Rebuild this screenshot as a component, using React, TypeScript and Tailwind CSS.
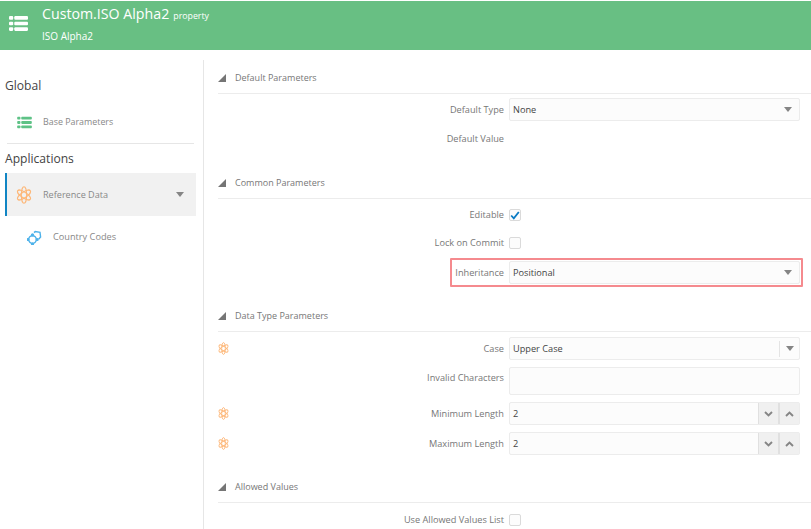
import React from "react";

const font = { fontFamily: '"Open Sans", "Noto Sans", sans-serif' };

function Atom({ w, h, sw = 1.3 }: { w: number; h: number; sw?: number }) {
  return (
    <svg width={w} height={h} viewBox="0 0 20 20" preserveAspectRatio="none" fill="none" stroke="#fdb778" strokeWidth={sw} className="shrink-0">
      <ellipse cx="10" cy="10" rx="3.3" ry="9.2" />
      <ellipse cx="10" cy="10" rx="3.3" ry="9.2" transform="rotate(60 10 10)" />
      <ellipse cx="10" cy="10" rx="3.3" ry="9.2" transform="rotate(120 10 10)" />
    </svg>
  );
}

function ListIcon({ color, w, h }: { color: string; w: number; h: number }) {
  return (
    <svg width={w} height={h} viewBox="0 0 18 16" fill={color} className="shrink-0">
      <rect x="0" y="1" width="4" height="3.4" rx="1" />
      <rect x="5" y="1" width="13" height="3.4" rx="1" />
      <rect x="0" y="6.3" width="4" height="3.4" rx="1" />
      <rect x="5" y="6.3" width="13" height="3.4" rx="1" />
      <rect x="0" y="11.6" width="4" height="3.4" rx="1" />
      <rect x="5" y="11.6" width="13" height="3.4" rx="1" />
    </svg>
  );
}

function Caret() {
  return (
    <svg width="8" height="5" viewBox="0 0 8 5" fill="#858585" className="shrink-0">
      <path d="M0 0h8L4 5z" />
    </svg>
  );
}

function Chev({ up }: { up?: boolean }) {
  return (
    <svg width="9" height="6" viewBox="0 0 9 6" fill="none" stroke="#858585" strokeWidth="1.9">
      <path d={up ? "M1 5l3.5-3.5L8 5" : "M1 1l3.5 3.5L8 1"} />
    </svg>
  );
}

function SectionHeader({ title, className }: { title: string; className: string }) {
  return (
    <div className={`flex items-center gap-[8px] h-[30px] pt-[3px] border-b border-[#ececec] box-content text-[9px] text-[#777] ${className}`}>
      <svg width="8" height="8" viewBox="0 0 8 8" fill="#757575" className="shrink-0">
        <path d="M8 0v8H0z" />
      </svg>
      <span className="ml-[1px]">{title}</span>
    </div>
  );
}

function Row({ label, atom, className, labelClass = "", children }: { label: string; atom?: boolean; className: string; labelClass?: string; children?: React.ReactNode }) {
  return (
    <div className={`flex items-center pr-[11px] ${className}`}>
      <div className="w-[10px] shrink-0 flex">{atom && <Atom w={11} h={13} sw={1.5} />}</div>
      <div className={`flex-1 text-right text-[9.2px] text-[#777] pr-[5px] ${labelClass}`}>{label}</div>
      <div className="w-[291px] shrink-0 flex items-center">{children}</div>
    </div>
  );
}

function Select({ value, split }: { value: string; split?: boolean }) {
  return (
    <div className="w-full h-[23px] flex items-center bg-[#fcfcfc] border border-[#ececec] rounded-[2px] pl-[3px] text-[9.2px] text-[#444]">
      <span className="flex-1">{value}</span>
      {split && <span className="h-[16px] w-px bg-[#e4e4e4]" />}
      <span className={`flex justify-center ${split ? "w-[19px]" : "w-[22px]"}`}>
        <Caret />
      </span>
    </div>
  );
}

function Spinner({ value }: { value: string }) {
  return (
    <div className="w-full h-[23px] flex items-center bg-[#fcfcfc] border border-[#ececec] rounded-[2px] pl-[3px] text-[9.2px] text-[#444]">
      <span className="flex-1">{value}</span>
      <span className="h-full w-[20px] flex items-center justify-center bg-[#f0f0f0] border-l border-[#e0e0e0]">
        <Chev />
      </span>
      <span className="h-full w-[21px] flex items-center justify-center bg-[#f0f0f0] border-l-2 border-[#e0e0e0]">
        <Chev up />
      </span>
    </div>
  );
}

function Check({ checked }: { checked?: boolean }) {
  return (
    <div className="w-[12px] h-[12px] bg-[#fcfcfc] border border-[#dadada] rounded-[2px] flex items-center justify-center">
      {checked && (
        <svg width="10" height="9" viewBox="0 0 10 9" fill="none" stroke="#0a7bc4" strokeWidth="1.8">
          <path d="M1.2 4.5L3.8 7.4 8.8 1" />
        </svg>
      )}
    </div>
  );
}

export default function App() {
  return (
    <div style={font} className="w-[811px] h-[529px] overflow-hidden bg-white">
      <header className="mt-px h-[49px] bg-[#68bf83] flex items-start text-white">
        <div className="pl-[9px] pt-[14px] w-[42px]">
          <ListIcon color="#ffffff" w={19} h={17} />
        </div>
        <div>
          <div className="flex items-baseline gap-[4px] h-[25px]">
            <span className="text-[14.2px] leading-[25px]">Custom.ISO Alpha2</span>
            <span className="text-[8.8px]">property</span>
          </div>
          <div className="text-[10px] leading-[14px] mt-[3px]">ISO Alpha2</div>
        </div>
      </header>
      <div className="flex mt-[10px]">
        <aside className="w-[204px] h-[469px] shrink-0 border-r border-[#e6e6e6] pr-[7px] pl-[5px]">
          <div className="text-[12.1px] leading-[18px] text-[#444] mt-[17px]">Global</div>
          <div className="flex items-center h-[48px] mt-[1px] pt-[5px] pl-[10px] gap-[11px] border-b border-[#e6e6e6] ml-[2px] mr-[2px] text-[8.9px] text-[#888]">
            <ListIcon color="#5ec286" w={15} h={13} />
            <span>Base Parameters</span>
          </div>
          <div className="text-[12.1px] leading-[18px] text-[#444] mt-[6px]">Applications</div>
          <div className="flex items-center h-[43px] mt-[5px] bg-[#f1f1f1] border-l-2 border-[#1185c4] pl-[9px] text-[9.1px] text-[#888]">
            <Atom w={16} h={18} sw={1.3} />
            <span className="ml-[11px] flex-1">Reference Data</span>
            <span className="mr-[12px]"><Caret /></span>
          </div>
          <div className="flex items-center h-[42px] pl-[22px] text-[9.2px] text-[#888]">
            <svg width="15" height="15" viewBox="0 0 15 15" fill="none" stroke="#4db2ea" strokeWidth="1.4" className="shrink-0">
              <circle cx="5.5" cy="9.5" r="3.8" />
              <path d="M7 2.6L8.2 1.6 13 2.4 13.6 7 11.6 9.2" />
              <circle cx="5.5" cy="4.8" r=".9" fill="#4db2ea" />
              <circle cx="1" cy="9.5" r=".9" fill="#4db2ea" />
              <circle cx="5.5" cy="14" r=".9" fill="#4db2ea" />
              <circle cx="10.2" cy="9.5" r=".9" fill="#4db2ea" />
            </svg>
            <span className="ml-[11px]">Country Codes</span>
          </div>
        </aside>
        <main className="flex-1 pl-[14px]">
          <SectionHeader title="Default Parameters" className="" />
          <Row label="Default Type" className="mt-[4px] h-[23px]"><Select value="None" /></Row>
          <Row label="Default Value" className="mt-[7px] h-[22px]" />
          <SectionHeader title="Common Parameters" className="mt-[15px]" />
          <Row label="Editable" className="mt-[5px] h-[22px]"><Check checked /></Row>
          <Row label="Lock on Commit" className="mt-[6px] h-[22px]"><Check /></Row>
          <div className="flex items-center h-[29px] mt-[4px] ml-[232px] mr-[8px] border-2 border-[#f58a8e] rounded-[1px] pr-[1px]">
            <div className="flex-1 text-right text-[9.2px] text-[#777] pr-[5px]">Inheritance</div>
            <div className="w-[291px] shrink-0"><Select value="Positional" /></div>
          </div>
          <SectionHeader title="Data Type Parameters" className="mt-[11px]" />
          <Row label="Case" atom className="mt-[5px] h-[23px]"><Select value="Upper Case" split /></Row>
          <Row label="Invalid Characters" labelClass="pb-[6px]" className="mt-[7px] h-[28px]">
            <div className="w-full h-[28px] bg-[#fcfcfc] border border-[#ececec] rounded-[2px]" />
          </Row>
          <Row label="Minimum Length" atom className="mt-[7px] h-[23px]"><Spinner value="2" /></Row>
          <Row label="Maximum Length" atom className="mt-[7px] h-[23px]"><Spinner value="2" /></Row>
          <SectionHeader title="Allowed Values" className="mt-[14px]" />
          <Row label="Use Allowed Values List" className="mt-[6px] h-[22px]"><Check /></Row>
        </main>
      </div>
    </div>
  );
}
